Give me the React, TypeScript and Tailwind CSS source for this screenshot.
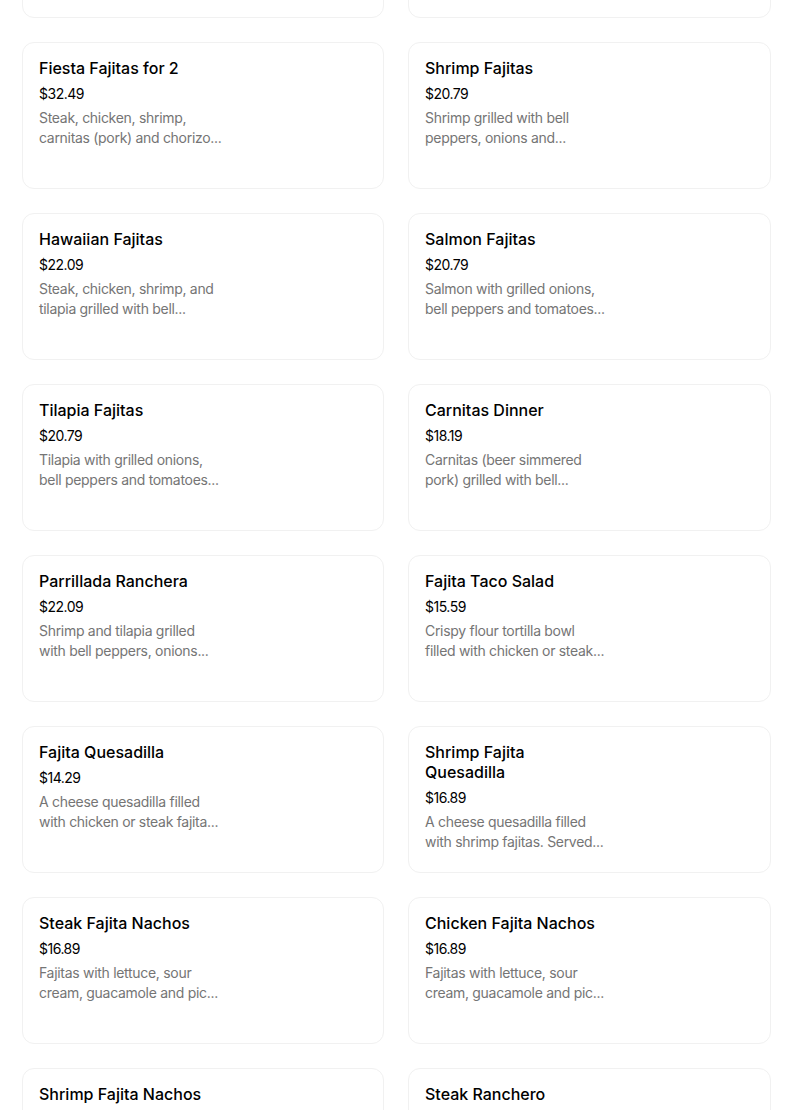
import React from "react";

type Item = {
  name: string[];
  price: string;
  desc: [string, string];
};

const rows: [Item, Item][] = [
  [
    { name: ["Fiesta Fajitas for 2"], price: "$32.49", desc: ["Steak, chicken, shrimp,", "carnitas (pork) and chorizo..."] },
    { name: ["Shrimp Fajitas"], price: "$20.79", desc: ["Shrimp grilled with bell", "peppers, onions and..."] },
  ],
  [
    { name: ["Hawaiian Fajitas"], price: "$22.09", desc: ["Steak, chicken, shrimp, and", "tilapia grilled with bell..."] },
    { name: ["Salmon Fajitas"], price: "$20.79", desc: ["Salmon with grilled onions,", "bell peppers and tomatoes..."] },
  ],
  [
    { name: ["Tilapia Fajitas"], price: "$20.79", desc: ["Tilapia with grilled onions,", "bell peppers and tomatoes..."] },
    { name: ["Carnitas Dinner"], price: "$18.19", desc: ["Carnitas (beer simmered", "pork) grilled with bell..."] },
  ],
  [
    { name: ["Parrillada Ranchera"], price: "$22.09", desc: ["Shrimp and tilapia grilled", "with bell peppers, onions..."] },
    { name: ["Fajita Taco Salad"], price: "$15.59", desc: ["Crispy flour tortilla bowl", "filled with chicken or steak..."] },
  ],
  [
    { name: ["Fajita Quesadilla"], price: "$14.29", desc: ["A cheese quesadilla filled", "with chicken or steak fajita..."] },
    { name: ["Shrimp Fajita", "Quesadilla"], price: "$16.89", desc: ["A cheese quesadilla filled", "with shrimp fajitas. Served..."] },
  ],
  [
    { name: ["Steak Fajita Nachos"], price: "$16.89", desc: ["Fajitas with lettuce, sour", "cream, guacamole and pic..."] },
    { name: ["Chicken Fajita Nachos"], price: "$16.89", desc: ["Fajitas with lettuce, sour", "cream, guacamole and pic..."] },
  ],
  [
    { name: ["Shrimp Fajita Nachos"], price: "$17.49", desc: ["Fajitas with lettuce, sour", "cream, guacamole and pic..."] },
    { name: ["Steak Ranchero"], price: "$18.19", desc: ["Steak grilled with onions,", "bell peppers and tomatoes..."] },
  ],
];

function MenuCard({ item }: { item?: Item }) {
  return (
    <div className="h-[147px] rounded-xl border border-[#f1f1f1] bg-white px-4 pt-[15px]">
      {item && (
        <div className="w-[190px]">
          <h3 className="text-[16px] leading-[20px] font-medium text-[#000]">
            {item.name.map((n) => (
              <span key={n} className="block whitespace-nowrap">
                {n}
              </span>
            ))}
          </h3>
          <p className="mt-[6px] text-[14px] leading-[20px] tracking-[-0.5px] text-[#000]">{item.price}</p>
          <p className="mt-[4px] text-[14px] leading-[20px] tracking-[-0.3px] text-[#757575]">
            <span className="block whitespace-nowrap">{item.desc[0]}</span>
            <span className="block whitespace-nowrap">{item.desc[1]}</span>
          </p>
        </div>
      )}
    </div>
  );
}

export default function App() {
  return (
    <div
      className="h-[1110px] w-[804px] overflow-hidden bg-white"
      style={{ fontFamily: "Inter, 'Liberation Sans', sans-serif" }}
    >
      <div className="-mt-[129px] ml-[22px] grid w-[749px] grid-cols-[362px_363px] gap-x-[24px] gap-y-[24px]">
        {/* row scrolled mostly out of view */}
        <MenuCard />
        <MenuCard />
        {rows.map((row, i) => (
          <React.Fragment key={i}>
            <MenuCard item={row[0]} />
            <MenuCard item={row[1]} />
          </React.Fragment>
        ))}
      </div>
    </div>
  );
}
